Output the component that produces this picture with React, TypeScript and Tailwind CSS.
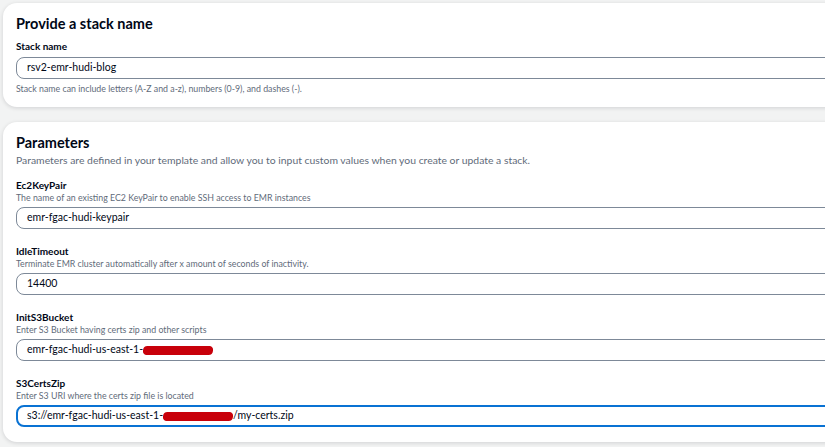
const fields = [
  {
    name: "Ec2KeyPair",
    hint: "The name of an existing EC2 KeyPair to enable SSH access to EMR instances",
    value: ["emr-fgac-hudi-keypair"],
  },
  {
    name: "IdleTimeout",
    hint: "Terminate EMR cluster automatically after x amount of seconds of inactivity.",
    value: ["14400"],
  },
  {
    name: "InitS3Bucket",
    hint: "Enter S3 Bucket having certs zip and other scripts",
    value: ["emr-fgac-hudi-us-east-1-", null],
  },
  {
    name: "S3CertsZip",
    hint: "Enter S3 URI where the certs zip file is located",
    value: ["s3://emr-fgac-hudi-us-east-1-", null, "/my-certs.zip"],
    focused: true,
  },
];

const Redacted = () => (
  <span className="inline-block w-[70px] h-[9px] bg-[#c8000a] rounded-[4px] align-middle -skew-x-6" />
);

const Input = ({ parts, focused }: { parts: (string | null)[]; focused?: boolean }) => (
  <div
    className={
      focused
        ? "h-[22px] flex items-center rounded-l-[8px] border-2 border-[#0972d3] pl-[9px] text-[10.5px] text-[#000716]"
        : "h-[22px] flex items-center rounded-l-[8px] border border-[#7d8998] pl-[10px] text-[10.5px] text-[#000716]"
    }
  >
    <span className="whitespace-nowrap">
      {parts.map((p, i) => (p === null ? <Redacted key={i} /> : <span key={i}>{p}</span>))}
    </span>
  </div>
);

export default function App() {
  return (
    <div
      className="w-[825px] h-[447px] overflow-hidden bg-[#f2f3f3]"
      style={{ fontFamily: "Lato, 'Open Sans', sans-serif" }}
    >
      <div className="w-[880px] pl-[3px] pt-[3px] flex flex-col gap-[15px]">
        <section className="bg-white rounded-[14px] shadow-[0_1px_4px_rgba(0,7,22,0.14)] pl-[13px] pt-[12px] pb-[12px]">
          <h2 className="text-[14.5px] leading-[18px] font-bold text-[#000716]">Provide a stack name</h2>
          <div className="mt-[6px] text-[10px] leading-[14px] font-bold text-[#000716]">Stack name</div>
          <div className="mt-[4px]">
            <Input parts={["rsv2-emr-hudi-blog"]} />
          </div>
          <p className="mt-[4px] text-[8.8px] leading-[12px] text-[#5f6b7a]">
            Stack name can include letters (A-Z and a-z), numbers (0-9), and dashes (-).
          </p>
        </section>

        <section className="bg-white rounded-[14px] shadow-[0_1px_4px_rgba(0,7,22,0.14)] pl-[13px] pt-[12px] pb-[15px]">
          <h2 className="text-[14.5px] leading-[18px] font-bold text-[#000716]">Parameters</h2>
          <p className="mt-px text-[10.4px] leading-[14px] text-[#5f6b7a]">
            Parameters are defined in your template and allow you to input custom values when you create or update a stack.
          </p>
          <div className="mt-[11px] flex flex-col gap-[15px]">
            {fields.map((f) => (
              <div key={f.name}>
                <div className="text-[10px] leading-[14px] font-bold text-[#000716]">{f.name}</div>
                <p className="text-[8.8px] leading-[12px] text-[#5f6b7a]">{f.hint}</p>
                <div className="mt-[3px]">
                  <Input parts={f.value} focused={f.focused} />
                </div>
              </div>
            ))}
          </div>
        </section>
      </div>
    </div>
  );
}
